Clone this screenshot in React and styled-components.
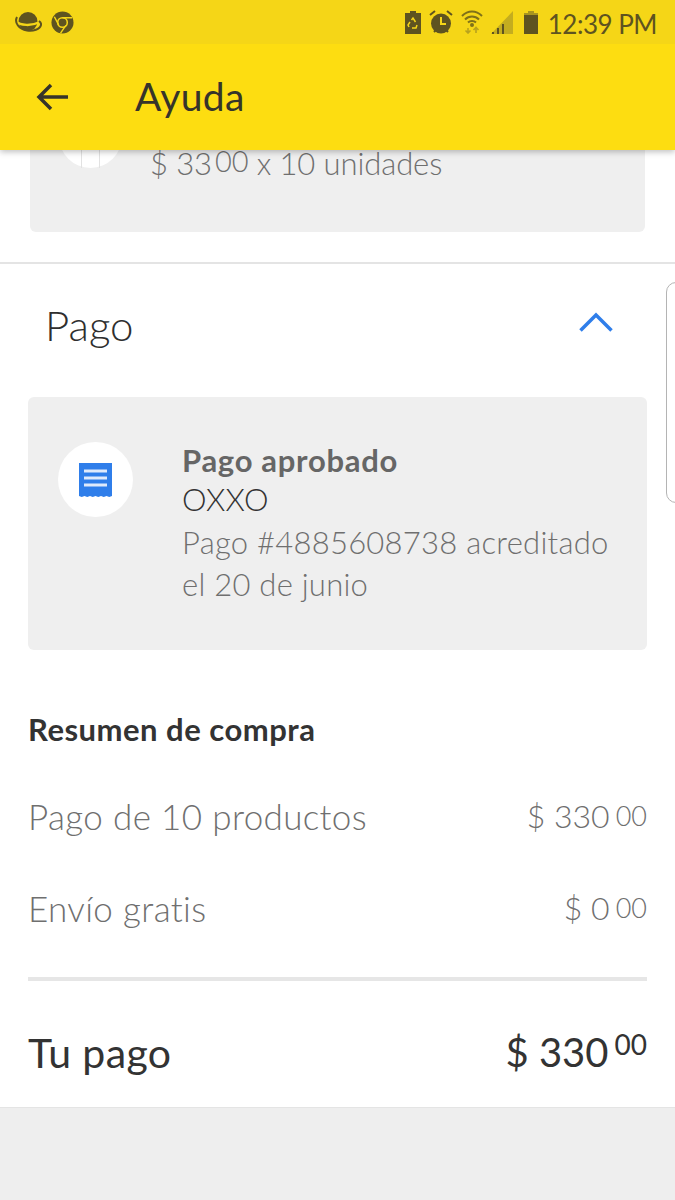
import React from 'react';
import styled, { createGlobalStyle } from 'styled-components';

const Global = createGlobalStyle`
  html, body {
    margin: 0;
    padding: 0;
    background: #eeeeee;
    font-family: Lato, "Open Sans", "Liberation Sans", sans-serif;
  }
  * { box-sizing: border-box; }
`;

const Screen = styled.div`
  position: relative;
  width: 675px;
  height: 1200px;
  overflow: hidden;
  background: #eeeeee;
`;

const Top = styled.header`
  position: relative;
  z-index: 2;
  box-shadow: 0 2px 6px rgba(0, 0, 0, 0.25);
`;

const StatusBar = styled.div`
  display: flex;
  align-items: center;
  justify-content: space-between;
  height: 44px;
  padding: 0 18px 0 15px;
  background: #f5d617;
  color: #5e5320;
`;

const StatusGroup = styled.div`
  display: flex;
  align-items: center;
  gap: ${(p) => p.$gap || 6}px;
`;

const Clock = styled.span`
  margin: 3px 0 0 2px;
  font-size: 26px;
  letter-spacing: -0.5px;
  color: #5e5320;
`;

const AppBar = styled.div`
  display: flex;
  align-items: center;
  height: 106px;
  padding: 0 0 0 36px;
  background: #fddd11;
`;

const Title = styled.h1`
  margin: 0 0 2px 67px;
  font-size: 39px;
  letter-spacing: 0.4px;
  font-weight: 400;
  color: #36342a;
`;

const Content = styled.main`
  display: flow-root;
  background: #ffffff;
  height: 958px;
  border-bottom: 1px solid #e4e4e4;
`;

const ClippedCard = styled.div`
  display: flex;
  gap: 28px;
  width: 615px;
  height: 132px;
  margin: -50px 0 0 30px;
  padding: 5px 0 0 29px;
  background: #efefef;
  border-radius: 6px;
`;

const ProductAvatar = styled.div`
  display: flex;
  justify-content: center;
  gap: 17px;
  flex: none;
  width: 63px;
  height: 63px;
  border-radius: 50%;
  background: #ffffff;
`;

const ProductBar = styled.div`
  width: 1px;
  height: 100%;
  background: #e2e2e2;
`;

const ProductText = styled.div`
  margin-top: 39px;
  font-size: 31px;
  font-weight: 300;
  letter-spacing: -0.1px;
  color: #6f6f6f;
  white-space: nowrap;
`;

const ProductCents = styled.span`
  margin-left: 3px;
  font-size: 29px;
  line-height: 0;
  vertical-align: 3px;
`;

const Section = styled.section`
  margin-top: 30px;
  border-top: 2px solid #e4e4e4;
`;

const SectionHead = styled.div`
  display: flex;
  align-items: center;
  justify-content: space-between;
  height: 133px;
  padding: 0 62px 12px 45px;
`;

const SectionTitle = styled.h2`
  margin: 0;
  font-size: 42px;
  font-weight: 300;
  color: #2e2e2e;
`;

const Chevron = styled.svg`
  margin-bottom: 6px;
`;

const PayCard = styled.div`
  display: flex;
  width: 619px;
  height: 253px;
  margin-left: 28px;
  padding: 45px 20px 0 30px;
  background: #efefef;
  border-radius: 6px;
`;

const PayAvatar = styled.div`
  display: flex;
  align-items: center;
  justify-content: center;
  flex: none;
  width: 75px;
  height: 75px;
  margin-right: 50px;
  border-radius: 50%;
  background: #ffffff;
`;

const PayText = styled.div`
  margin: 1px 0 0 -1px;
`;

const PayLine = styled.div`
  font-size: ${(p) => p.$size || 31}px;
  line-height: ${(p) => p.$line || 42}px;
  letter-spacing: ${(p) => p.$track || 0.25}px;
  font-weight: ${(p) => p.$weight || 300};
  color: ${(p) => p.$color || '#6f6f6f'};
  white-space: nowrap;
`;

const Summary = styled.div`
  padding: 57px 28px 0 28px;
`;

const SummaryTitle = styled.h3`
  margin: 0 0 19px;
  font-size: 31px;
  line-height: 44px;
  letter-spacing: 0.5px;
  font-weight: 700;
  color: #333333;
`;

const Row = styled.div`
  display: flex;
  align-items: center;
  justify-content: space-between;
  height: ${(p) => p.$height}px;
  color: ${(p) => p.$color};
  font-weight: ${(p) => p.$weight};
  font-size: ${(p) => p.$size}px;
  letter-spacing: 0.35px;
`;

const Price = styled.span`
  display: inline-flex;
  align-items: flex-start;
  font-size: ${(p) => p.$size}px;
  letter-spacing: 0;
  line-height: 1;
`;

const Cents = styled.span`
  margin: ${(p) => p.$top}px 0 0 6px;
  font-size: ${(p) => p.$size}px;
  line-height: 1;
`;

const Rule = styled.hr`
  margin: 23px 0 0;
  height: 4px;
  border: 0;
  background: #e6e6e6;
`;

// the sheet handle peeking in from the right edge
const SideHandle = styled.div`
  position: absolute;
  top: 282px;
  right: -12px;
  width: 21px;
  height: 221px;
  border: 1px solid #b4b4b4;
  border-radius: 10px;
  background: #ffffff;
`;

const PlanetIcon = () => (
  <svg width="27" height="21" viewBox="0 0 27 21" fill="none">
    <circle cx="13" cy="9.500" r="9.500" fill="#5e5320" />
    <path d="M1 9c4 5 16 5 24 1" stroke="#f5d617" strokeWidth="2.500" />
    <path d="M2 5C-1 11 4 17 12 18.500c6 1 13-1 14-5.500.4-2-.6-3-2-4" stroke="#5e5320" strokeWidth="2" />
  </svg>
);

const ChromeIcon = () => (
  <svg width="23" height="23" viewBox="0 0 24 24">
    <circle cx="12" cy="12" r="11.5" fill="#5e5320" />
    <circle cx="12" cy="12" r="5" fill="none" stroke="#f5d617" strokeWidth="1.6" />
    <path d="M12 7h10M8 14.500 3.500 6M15.500 15 10 23" stroke="#f5d617" strokeWidth="1.5" fill="none" />
  </svg>
);

const RecycleBattery = () => (
  <svg width="16" height="23" viewBox="0 0 16 23">
    <path d="M5 0h6v2h5v21H0V2h5z" fill="#5e5320" />
    <path d="M6.500 9 8 7l2.500 4M12 14l-1 3H7M4 16l-1-2 2-3" stroke="#f5d617" strokeWidth="1.5" fill="none" />
  </svg>
);

const AlarmIcon = () => (
  <svg width="24" height="24" viewBox="0 0 24 24">
    <circle cx="12" cy="13.500" r="10" fill="#5e5320" />
    <path d="M1 5l5-4M23 5l-5-4M5 22l2-2M19 22l-2-2" stroke="#5e5320" strokeWidth="2" />
    <path d="M12 7v7h5" stroke="#f5d617" strokeWidth="2" fill="none" />
  </svg>
);

const WifiIcon = () => (
  <svg width="22" height="24" viewBox="0 0 22 24" fill="none" stroke="#7f7119" strokeWidth="2">
    <path d="M1 6c6-6 14-6 20 0M4 9.500c4-4 10-4 14 0M7 12.500c2-2 6-2 8 0" />
    <circle cx="11" cy="15" r="1" fill="#7f7119" />
    <path d="M7 18v5M4.500 20.500 7 23l2.500-2.500M15 23v-5M12.500 20 15 17.500l2.500 2.500" stroke="#b8a21e" strokeWidth="1.600" />
  </svg>
);

const SignalIcon = () => (
  <svg width="25" height="23" viewBox="0 0 25 23">
    <path d="M0 23 22 0v23z" fill="#c4ad1f" />
    <path d="M1 23v-2h2v2zM6 23v-6h2v6zM11 23v-10h2v10z" fill="#5e5320" />
  </svg>
);

const BatteryIcon = () => (
  <svg width="14" height="23" viewBox="0 0 14 23">
    <path d="M4 0h6v2h4v3H0V2h4z" fill="#a8951f" />
    <rect y="4" width="14" height="19" fill="#5e5320" />
  </svg>
);

const BackArrow = () => (
  <svg width="32" height="28" viewBox="0 0 32 28" fill="none" stroke="#36342a" strokeWidth="3.500">
    <path d="M32 14H3M15 2 3 14l12 12" />
  </svg>
);

const ChevronUp = () => (
  <Chevron width="34" height="20" viewBox="0 0 34 20" fill="none" stroke="#2f7eea" strokeWidth="3.500">
    <path d="M1.500 18.500 17 3l15.500 15.500" />
  </Chevron>
);

const ReceiptIcon = () => (
  <svg width="33" height="34" viewBox="0 0 33 34">
    <path
      d="M0 0h33v33l-2.750 1-2.750-1-2.750 1-2.750-1-2.750 1-2.750-1-2.750 1-2.750-1-2.750 1-2.750-1-2.750 1L0 33z"
      fill="#2f7eea"
    />
    <path d="M5 8h23M5 15h23M5 22h23" stroke="#dfeafb" strokeWidth="3" />
  </svg>
);

const Amount = ({ value, size, centsSize, centsTop }) => (
  <Price $size={size}>
    $ {value}
    <Cents $size={centsSize} $top={centsTop}>00</Cents>
  </Price>
);

const App = () => {
  return (
    <Screen>
      <Global />
      <Top>
        <StatusBar>
          <StatusGroup $gap={9}>
            <PlanetIcon />
            <ChromeIcon />
          </StatusGroup>
          <StatusGroup $gap={8}>
            <RecycleBattery />
            <AlarmIcon />
            <WifiIcon />
            <SignalIcon />
            <BatteryIcon />
            <Clock>12:39 PM</Clock>
          </StatusGroup>
        </StatusBar>
        <AppBar>
          <BackArrow />
          <Title>Ayuda</Title>
        </AppBar>
      </Top>
      <Content>
        <ClippedCard>
          <ProductAvatar>
            <ProductBar />
            <ProductBar />
          </ProductAvatar>
          <ProductText>$ 33<ProductCents>00</ProductCents> x 10 unidades</ProductText>
        </ClippedCard>
        <Section>
          <SectionHead>
            <SectionTitle>Pago</SectionTitle>
            <ChevronUp />
          </SectionHead>
          <PayCard>
            <PayAvatar>
              <ReceiptIcon />
            </PayAvatar>
            <PayText>
              <PayLine $weight={700} $size={31} $line={34} $track={0.7} $color="#666666">Pago aprobado</PayLine>
              <PayLine $size={31} $line={44} $color="#333333">OXXO</PayLine>
              <PayLine>Pago #4885608738 acreditado</PayLine>
              <PayLine>el 20 de junio</PayLine>
            </PayText>
          </PayCard>
          <Summary>
            <SummaryTitle>Resumen de compra</SummaryTitle>
            <Row $height={92} $size={35} $weight={300} $color="#6f6f6f">
              Pago de 10 productos
              <Amount value="330" size={32} centsSize={27} centsTop={2} />
            </Row>
            <Row $height={92} $size={35} $weight={300} $color="#6f6f6f">
              Envío gratis
              <Amount value="0" size={32} centsSize={27} centsTop={2} />
            </Row>
            <Rule />
            <Row $height={142} $size={41} $weight={400} $color="#333333">
              Tu pago
              <Amount value="330" size={40} centsSize={28} centsTop={-2} />
            </Row>
          </Summary>
        </Section>
      </Content>
      <SideHandle />
    </Screen>
  );
};

export default App;
